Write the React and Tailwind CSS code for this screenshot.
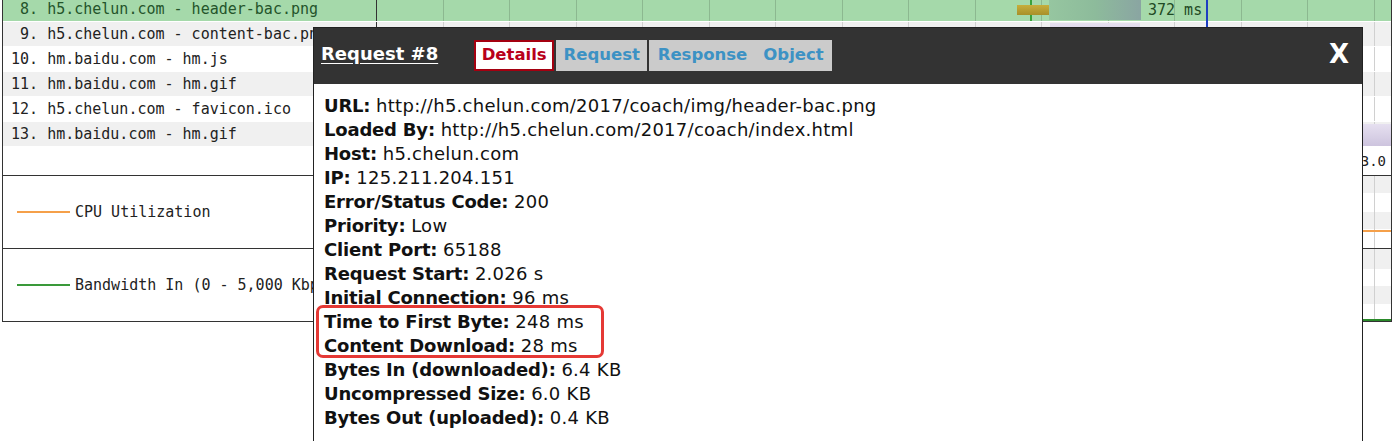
import React from "react";

const rows = [
  { n: " 8.", t: "h5.chelun.com - header-bac.png", bg: "bg-[#a5d9aa]", text: "text-[#24542a]" },
  { n: " 9.", t: "h5.chelun.com - content-bac.png", bg: "bg-[#f0f0f0]", text: "text-[#222]" },
  { n: "10.", t: "hm.baidu.com - hm.js", bg: "bg-white", text: "text-[#222]" },
  { n: "11.", t: "hm.baidu.com - hm.gif", bg: "bg-[#f0f0f0]", text: "text-[#222]" },
  { n: "12.", t: "h5.chelun.com - favicon.ico", bg: "bg-white", text: "text-[#222]" },
  { n: "13.", t: "hm.baidu.com - hm.gif", bg: "bg-[#f0f0f0]", text: "text-[#222]" },
];

// 15 time gridlines, 0.2 s apart; only the last label shows beside the dialog
const ticks = Array.from({ length: 15 }, (_, i) => ((i + 1) * 0.2).toFixed(1));

const details = [
  ["URL:", "http://h5.chelun.com/2017/coach/img/header-bac.png"],
  ["Loaded By:", "http://h5.chelun.com/2017/coach/index.html"],
  ["Host:", "h5.chelun.com"],
  ["IP:", "125.211.204.151"],
  ["Error/Status Code:", "200"],
  ["Priority:", "Low"],
  ["Client Port:", "65188"],
  ["Request Start:", "2.026 s"],
  ["Initial Connection:", "96 ms"],
  ["Time to First Byte:", "248 ms"],
  ["Content Download:", "28 ms"],
  ["Bytes In (downloaded):", "6.4 KB"],
  ["Uncompressed Size:", "6.0 KB"],
  ["Bytes Out (uploaded):", "0.4 KB"],
];

const GridLines = ({ dark }) => (
  <div className="absolute inset-0 flex pointer-events-none">
    {ticks.map((t) => (
      <div
        key={t}
        className={`w-[66.5px] shrink-0 border-r ${dark ? "border-black/15" : "border-[#d0d0d0]"}`}
      />
    ))}
  </div>
);

const Legend = ({ color, label, stripes, children }) => (
  <div className="flex h-[73px] border-t border-[#333]">
    <div className="w-[374px] shrink-0 flex items-center pl-[14px] gap-[5px] border-r border-[#333]">
      <div className={`w-[53px] h-[2px] ${color}`} />
      <span className="text-[15px] text-[#222] font-['DejaVu_Sans_Mono',monospace]">{label}</span>
    </div>
    <div className="relative flex-1 flex flex-col">
      {stripes.map((s, i) => (
        <div key={i} className={`${s} ${i % 2 === 0 ? "bg-[#f0f0f0]" : "bg-white"}`} />
      ))}
      <GridLines />
      {children}
    </div>
  </div>
);

export default function App() {
  return (
    <div className="relative w-[1400px] h-[441px] overflow-hidden bg-white font-['DejaVu_Sans',sans-serif]">
      {/* waterfall table */}
      <div className="ml-[2px] w-[1390px] border-x border-b border-[#333] -mt-[3px]">
        <div className="relative">
          {rows.map((r, i) => (
            <div key={r.n} className={`flex h-[25px] border-b border-white ${r.bg}`}>
              <div className="w-[374px] shrink-0 pl-[8px] flex items-center border-r border-[#333] overflow-hidden">
                <span className={`whitespace-pre text-[15px] font-['DejaVu_Sans_Mono',monospace] ${r.text}`}>
                  {r.n} {r.t}
                </span>
              </div>
              <div className="relative flex-1">
                <GridLines dark={i === 0} />
                {i === 0 && (
                  <>
                    <div className="absolute left-[653px] top-0 h-full w-[2px] bg-[#3aa23a]" />
                    <div className="absolute left-[640px] top-[8px] w-[33px] h-[10px] bg-gradient-to-b from-[#c6ae3c] to-[#a8902a]" />
                    <div className="absolute left-[672px] top-[3px] w-[92px] h-[20px] bg-gradient-to-r from-[#96c6a0] via-[#8dbb9b] to-[#8aa5a2]" />
                    <span className="absolute left-[771px] top-[3px] leading-[20px] text-[15px] text-[#1f4a25] font-['DejaVu_Sans_Mono',monospace]">
                      372 ms
                    </span>
                  </>
                )}
                {i === 1 && (
                  <div className="absolute left-[673px] top-[1px] w-[90px] h-[20px] bg-gradient-to-b from-[#e6e0f0] to-[#cfc6e2]" />
                )}
                {i === 5 && (
                  <div className="absolute left-[830px] top-[2px] right-0 h-[22px] bg-gradient-to-b from-[#e6e0f0] to-[#cdc4de]" />
                )}
              </div>
            </div>
          ))}
          {/* blue marker line across the rows */}
          <div className="absolute left-[1203px] top-0 h-[150px] w-[2px] bg-[#1d3fc2]" />
          <div className="flex h-[28px]">
            <div className="w-[374px] shrink-0 border-r border-[#333]" />
            <div className="flex-1 flex justify-end pr-[5px]">
              <span className="pt-[4px] text-[14px] text-[#222] font-['DejaVu_Sans_Mono',monospace]">
                {ticks[ticks.length - 1]}
              </span>
            </div>
          </div>
        </div>

        <Legend
          color="bg-[#f5a04a]"
          label="CPU Utilization"
          stripes={["h-[17px]", "h-[19px]", "h-[18px]", "h-[19px]"]}
        >
          <div className="absolute left-0 right-0 top-[54px] h-[2px] bg-[#f5a04a]" />
        </Legend>
        <Legend
          color="bg-[#3a993a]"
          label="Bandwidth In (0 - 5,000 Kbps)"
          stripes={["h-[20px]", "h-[18px]", "h-[18px]", "h-[17px]"]}
        >
          <div className="absolute left-0 right-0 bottom-0 h-[2px] bg-[#2a8a2a]" />
        </Legend>
      </div>

      {/* request details dialog */}
      <div className="absolute left-[313px] top-[27px] w-[1050px] border border-[#222]">
        <div className="h-[56px] bg-[#333] flex items-center pl-[7px] pr-[13px]">
          <span className="-mt-[5px] text-white text-[18px] font-bold underline underline-offset-[3px]">Request #8</span>
          <div className="ml-[36px] flex gap-[2px] h-[31px] -mt-[2px] text-[16.5px] font-bold">
            <div className="w-[80px] bg-white border-2 border-[#a40010] flex items-center justify-center text-[#b8001a]">
              Details
            </div>
            <div className="w-[91px] bg-[#cbcbcb] flex items-center justify-center text-[#3d92c4]">
              Request
            </div>
            <div className="w-[183px] bg-[#cbcbcb] flex items-center justify-center gap-[16px] text-[#3d92c4]">
              <span>Response</span>
              <span>Object</span>
            </div>
          </div>
          <span className="ml-auto -mt-[5px] text-white text-[26px] font-bold leading-none">X</span>
        </div>
        <div className="h-[400px] bg-white pl-[10px] pt-[10px] text-[18px] leading-[24px] text-[#111]">
          {details.map(([k, v]) => (
            <div key={k} className="whitespace-nowrap">
              <span className="font-bold tracking-[-0.2px]">{k}</span>{" "}
              <span className="tracking-[0.28px]">{v}</span>
            </div>
          ))}
        </div>
      </div>

      {/* highlight annotation */}
      <div className="absolute left-[316px] top-[305px] w-[288px] h-[53px] border-[3px] border-[#e53935] rounded-[7px]" />
    </div>
  );
}
